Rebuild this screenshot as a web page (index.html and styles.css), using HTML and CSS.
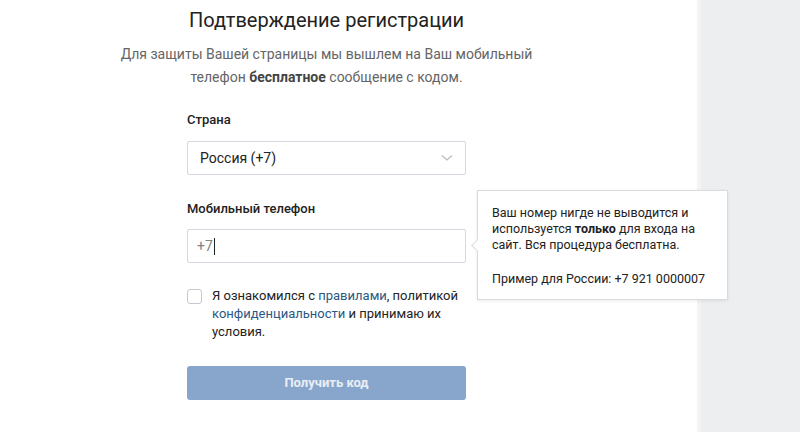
FILE: index.html
```html
<!DOCTYPE html>
<html lang="ru">
<head>
    <meta charset="UTF-8">
    <meta name="viewport" content="width=device-width, initial-scale=1.0">
    <title>Подтверждение регистрации</title>
    <link rel="stylesheet" href="styles.css">
</head>
<body>
    <div class="page">
        <div class="content">
            <div class="header">
                <h1 class="title">Подтверждение регистрации</h1>
                <p class="subtitle">Для защиты Вашей страницы мы вышлем на Ваш мобильный<br>телефон <b>бесплатное</b> сообщение с кодом.</p>
            </div>

            <label class="label">Страна</label>
            <div class="select">
                <span>Россия (+7)</span>
                <svg class="chevron" width="12" height="8" viewBox="0 0 12 8">
                    <path d="M1 1.5 L6 6 L11 1.5" fill="none" stroke="#b4bdc6" stroke-width="1.3"/>
                </svg>
            </div>

            <label class="label phone-label">Мобильный телефон</label>
            <div class="field">
                <div class="input">+7<span class="caret"></span></div>

                <div class="tip">
                    <p>Ваш номер нигде не выводится и используется <b>только</b> для входа на сайт. Вся процедура бесплатна.</p>
                    <p>Пример для России: +7 921 0000007</p>
                </div>
            </div>

            <div class="agree">
                <span class="checkbox"></span>
                <p>Я ознакомился с <a href="#">правилами</a>, политикой <a href="#">конфиденциальности</a> и принимаю их условия.</p>
            </div>

            <div class="button">Получить код</div>
        </div>
    </div>
    <div class="side"></div>
</body>
</html>
```

FILE: styles.css
```css
body {
    margin: 0;
    display: flex;
    height: 432px;
    overflow: hidden;
    font-family: Roboto, "Liberation Sans", sans-serif;
    color: #222;
    background-color: #edeef0;
}

.page {
    width: 697px;
    background: white;
}

.side {
    flex: 1;
    border-left: 4px solid #f3f3f4;
    background-color: #edeef0;
}

.content {
    width: 279px;
    margin-left: 187px;
}

.header {
    margin: 0 -120px;
    text-align: center;
}

.title {
    margin: 6px 0 0;
    font-size: 20px;
    font-weight: normal;
    line-height: 28px;
    color: #222;
}

.subtitle {
    margin: 9px 0 0;
    font-size: 14px;
    line-height: 23px;
    color: #656565;
}

.subtitle b {
    color: #444;
    font-weight: bold;
}

.label {
    display: block;
    margin-top: 22px;
    font-size: 13px;
    font-weight: 500;
    line-height: 18px;
}

.phone-label {
    margin-top: 25px;
}

.select, .input {
    box-sizing: border-box;
    height: 34px;
    margin-top: 12px;
    border: 1px solid #d3d9de;
    border-radius: 2px;
    font-size: 14px;
    display: flex;
    align-items: center;
}

.select {
    justify-content: space-between;
    padding: 0 12px 0 12px;
}

.input {
    margin-top: 11px;
    padding: 0 9px;
    color: #828282;
}

.caret {
    display: inline-block;
    width: 1px;
    height: 17px;
    margin-left: 1px;
    background: #222;
}

.field {
    position: relative;
}

.tip {
    position: absolute;
    left: 290px;
    top: -39px;
    width: 222px;
    padding: 14px 13px 12px 14px;
    background: white;
    border: 1px solid #d7dbe0;
    box-shadow: 0 1px 3px rgba(0, 0, 0, 0.08);
    font-size: 12.5px;
    line-height: 16px;
    color: #222;
}

.tip p {
    margin: 0;
}

.tip p + p {
    margin-top: 18px;
}

.tip::before {
    content: "";
    position: absolute;
    left: -5px;
    top: 50px;
    width: 8px;
    height: 8px;
    background: white;
    border-left: 1px solid #d7dbe0;
    border-bottom: 1px solid #d7dbe0;
    transform: rotate(45deg);
}

.agree {
    display: flex;
    margin-top: 24px;
    font-size: 13px;
    line-height: 18px;
}

.agree p {
    margin: 0;
}

.agree a {
    color: #2a5885;
    text-decoration: none;
}

.checkbox {
    flex: none;
    box-sizing: border-box;
    width: 15px;
    height: 15px;
    margin: 2px 10px 0 0;
    border: 1px solid #c1c9d1;
    border-radius: 3px;
}

.button {
    margin-top: 25px;
    height: 34px;
    line-height: 34px;
    border-radius: 3px;
    background-color: #88a6cb;
    color: #e9eef5;
    text-align: center;
    font-size: 13px;
    font-weight: bold;
}
```
